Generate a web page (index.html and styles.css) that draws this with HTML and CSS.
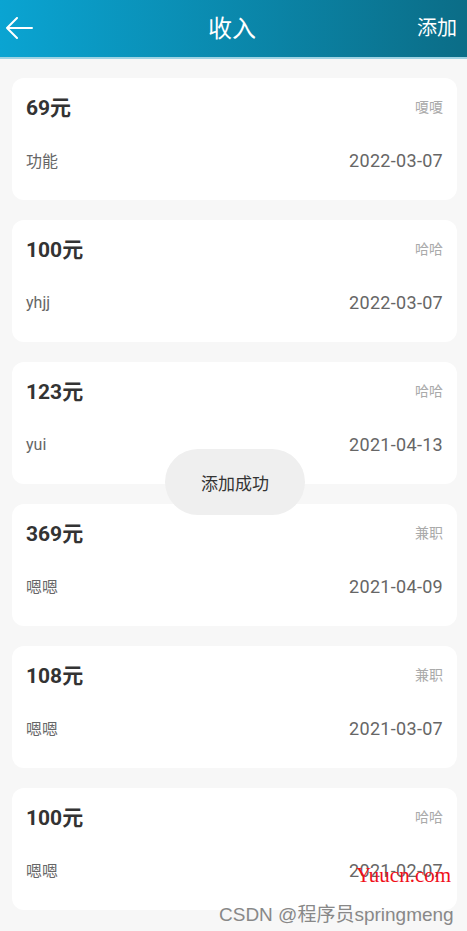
FILE: index.html
```html
<!DOCTYPE html>
<html lang="zh">
<head>
    <meta charset="UTF-8">
    <title>收入</title>
    <link rel="stylesheet" href="styles.css">
</head>
<body>
    <div class="header">
        <span class="back">
            <svg width="28" height="22" viewBox="0 0 28 22">
                <path d="M27 11H2M12 1L2 11L12 21" fill="none" stroke="#fff" stroke-width="2" stroke-linecap="round" stroke-linejoin="round"/>
            </svg>
        </span>
        <span class="title">收入</span>
        <span class="add">添加</span>
    </div>

    <div class="list">
        <div class="card">
            <div class="row"><span class="money">69元</span><span class="tag">嗄嗄</span></div>
            <div class="row"><span class="note">功能</span><span class="date">2022-03-07</span></div>
        </div>
        <div class="card">
            <div class="row"><span class="money">100元</span><span class="tag">哈哈</span></div>
            <div class="row"><span class="note">yhjj</span><span class="date">2022-03-07</span></div>
        </div>
        <div class="card">
            <div class="row"><span class="money">123元</span><span class="tag">哈哈</span></div>
            <div class="row"><span class="note">yui</span><span class="date">2021-04-13</span></div>
        </div>
        <div class="card">
            <div class="row"><span class="money">369元</span><span class="tag">兼职</span></div>
            <div class="row"><span class="note">嗯嗯</span><span class="date">2021-04-09</span></div>
        </div>
        <div class="card">
            <div class="row"><span class="money">108元</span><span class="tag">兼职</span></div>
            <div class="row"><span class="note">嗯嗯</span><span class="date">2021-03-07</span></div>
        </div>
        <div class="card">
            <div class="row"><span class="money">100元</span><span class="tag">哈哈</span></div>
            <div class="row"><span class="note">嗯嗯</span><span class="date">2021-02-07</span></div>
        </div>
    </div>

    <div class="toast">添加成功</div>
    <div class="mark-red">Yuucn.com</div>
    <div class="mark">CSDN @程序员springmeng</div>
</body>
</html>
```

FILE: styles.css
```css
body {
    margin: 0;
    background-color: #f7f7f7;
    font-family: Roboto, "Noto Sans CJK SC", sans-serif;
    width: 467px;
    height: 931px;
    overflow: hidden;
    position: relative;
}

.header {
    height: 53px;
    background: linear-gradient(to right, #0aa4d2, #0b6d87);
    border-bottom: 2px solid #9fd3e3;
    display: flex;
    align-items: center;
    justify-content: space-between;
    padding: 0 10px 4px 5px;
    color: #fff;
}

.back {
    width: 60px;
    display: flex;
    padding-top: 2px;
}

.title {
    font-size: 24px;
    padding-left: 2px;
}

.add {
    width: 60px;
    text-align: right;
    font-size: 20px;
}

.list {
    display: flex;
    flex-direction: column;
    gap: 20px;
    padding: 19px 10px 0 12px;
}

.card {
    background-color: #fff;
    border-radius: 12px;
    height: 122px;
    padding: 0 14px;
    display: flex;
    flex-direction: column;
    box-sizing: border-box;
}

.row {
    display: flex;
    justify-content: space-between;
    align-items: center;
    height: 52px;
}

.row:first-child {
    margin-top: 2px;
}

.row:last-child {
    margin-top: 2px;
}

.money {
    font-size: 21px;
    font-weight: bold;
    color: #333;
}

.tag {
    font-size: 14px;
    color: #aaa;
}

.note {
    font-size: 16px;
    color: #666;
}

.date {
    font-size: 18px;
    letter-spacing: 0.3px;
    color: #666;
}

.toast {
    position: absolute;
    left: 165px;
    top: 449px;
    width: 140px;
    height: 66px;
    border-radius: 33px;
    background-color: #efefef;
    color: #333;
    font-size: 17px;
    display: flex;
    align-items: center;
    justify-content: center;
}

.mark-red {
    position: absolute;
    left: 356px;
    top: 863px;
    font-family: "Liberation Serif", serif;
    font-size: 21px;
    color: #f0101a;
}

.mark {
    position: absolute;
    left: 219px;
    top: 899px;
    font-size: 19px;
    color: #888;
    font-family: "Liberation Sans", "Noto Sans CJK SC", sans-serif;
}
```
